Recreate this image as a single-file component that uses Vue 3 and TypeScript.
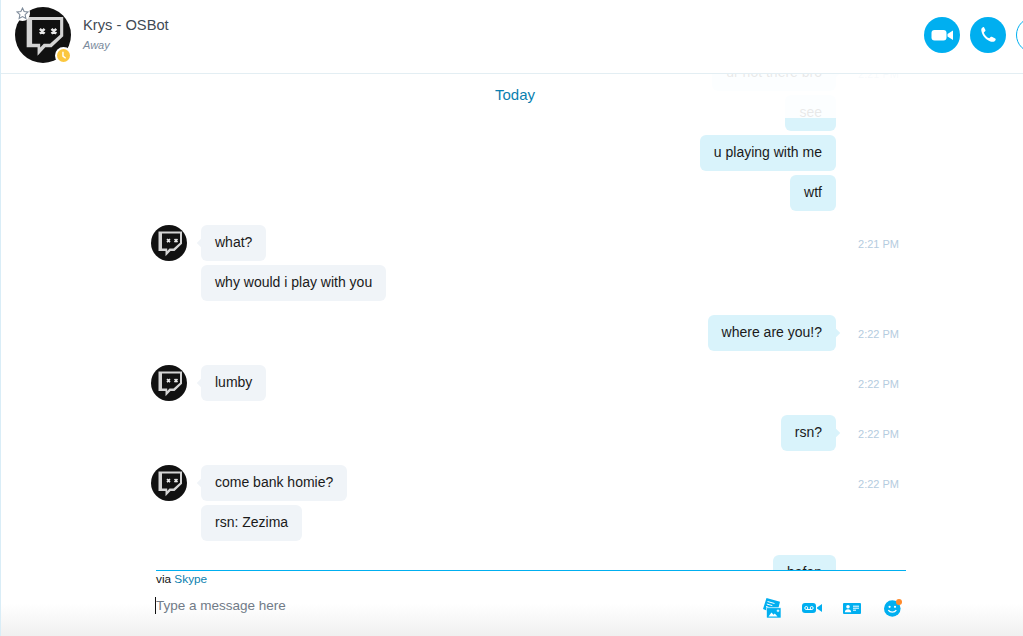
<script setup lang="ts">
interface Message {
  id: number
  from: 'them' | 'me'
  text: string
  time?: string
  avatar?: boolean
  newGroup?: boolean
}

const messages: Message[] = [
  { id: 1, from: 'me', text: 'ur not there bro', time: '2:21 PM' },
  { id: 2, from: 'me', text: 'see' },
  { id: 3, from: 'me', text: 'u playing with me' },
  { id: 4, from: 'me', text: 'wtf' },
  { id: 5, from: 'them', text: 'what?', time: '2:21 PM', avatar: true, newGroup: true },
  { id: 6, from: 'them', text: 'why would i play with you' },
  { id: 7, from: 'me', text: 'where are you!?', time: '2:22 PM', newGroup: true },
  { id: 8, from: 'them', text: 'lumby', time: '2:22 PM', avatar: true, newGroup: true },
  { id: 9, from: 'me', text: 'rsn?', time: '2:22 PM', newGroup: true },
  { id: 10, from: 'them', text: 'come bank homie?', time: '2:22 PM', avatar: true, newGroup: true },
  { id: 11, from: 'them', text: 'rsn: Zezima' },
  { id: 12, from: 'me', text: 'bafan', newGroup: true }
]
</script>

<template>
  <div class="page">
    <header class="topbar">
      <div class="profile">
        <div class="avatar-large">
          <svg class="logo" viewBox="0 0 36 36">
            <circle cx="18" cy="18" r="18" fill="#111" />
            <path d="M7.500 6.400H31V18.800L23.500 25.900H19.500L14.500 31.300V25.900H7.500Z" fill="#d4d4d4" />
            <path d="M11 8.400H29V17.800L22.500 23.600H18.500L16.200 26V23.600H11Z" fill="#111" />
            <path d="M16 14.100l3 3m0-3l-3 3M23.500 14.100l3 3m0-3l-3 3" stroke="#e8e8e8" stroke-width="1.600" />
          </svg>
          <span class="star">
            <svg viewBox="0 0 12 12"><path d="M6 1l1.500 3.200 3.500.4-2.600 2.400.7 3.500L6 8.800l-3.100 1.700.7-3.500L1 4.600l3.500-.4z" fill="none" stroke="#7f8c9b" stroke-width="1" /></svg>
          </span>
          <span class="away">
            <svg viewBox="0 0 12 12"><circle cx="6" cy="6" r="6" fill="#fbc73f" /><path d="M5.500 2.500v4l2.500 2" fill="none" stroke="#fff" stroke-width="1.300" /></svg>
          </span>
        </div>
        <div class="who">
          <div class="name">Krys - OSBot</div>
          <div class="status">Away</div>
        </div>
      </div>
      <div class="calls">
        <button class="call">
          <svg viewBox="0 0 36 36" width="36" height="36"><rect x="7.500" y="13" width="15" height="10.500" rx="3" fill="#fff" /><path d="M23.500 17l5.500-3.500v9.500l-5.500-3.500z" fill="#fff" /></svg>
        </button>
        <button class="call">
          <svg viewBox="0 0 36 36" width="36" height="36"><path d="M13.500 10c-1.500.6-2.500 1.700-2.200 3.500.7 5 5 9.900 9.800 11.200 1.900.5 3.800-.2 4.500-1.800.2-.6.100-1-.4-1.300l-3.300-1.800c-.5-.3-.9-.2-1.300.2l-1.300 1.300c-2.600-1-4.600-3.300-5.500-5.900l1.300-1.200c.4-.4.500-.8.300-1.300l-1.400-2.600c-.2-.4-.5-.5-1-.3z" fill="#fff" /></svg>
        </button>
        <button class="call outline"></button>
      </div>
    </header>

    <main class="chat">
      <div class="history">
        <div
          v-for="m in messages"
          :key="m.id"
          class="row"
          :class="[m.from, { 'new-group': m.newGroup }]"
        >
          <div class="side">
            <svg v-if="m.avatar" class="logo-small" viewBox="0 0 36 36">
              <circle cx="18" cy="18" r="18" fill="#111" />
              <path d="M7.500 6.400H31V18.800L23.500 25.900H19.500L14.500 31.300V25.900H7.500Z" fill="#d4d4d4" />
              <path d="M11 8.400H29V17.800L22.500 23.600H18.500L16.200 26V23.600H11Z" fill="#111" />
              <path d="M16 14.100l3 3m0-3l-3 3M23.500 14.100l3 3m0-3l-3 3" stroke="#e8e8e8" stroke-width="1.600" />
            </svg>
          </div>
          <div class="track">
            <div class="bubble" :class="{ tail: m.time }">{{ m.text }}</div>
          </div>
          <div class="time">{{ m.time }}</div>
        </div>
      </div>
      <div class="fade">
        <span class="today">Today</span>
      </div>
    </main>

    <footer class="composer">
      <div class="composer-inner">
        <div class="via">via <span class="skype">Skype</span></div>
        <div class="input-row">
          <div class="placeholder">Type a message here</div>
          <div class="tools">
            <svg viewBox="0 0 18 20" width="18" height="20">
              <path d="M3.500 0l13.500 3.800-1.500 6H6v3.600L0 11z" fill="#00aff0" />
              <path d="M4.500 3.500l7 2M3.800 6l5.500 1.600M3 8.500l2.500.7" stroke="#fff" stroke-width="1" />
              <rect x="3.500" y="9.800" width="14.500" height="10.200" fill="#00aff0" stroke="#fff" stroke-width=".6" />
              <path d="M5.500 18.500l3-4 2 2.300 1.300-1.200 2.700 2.900z" fill="#fff" />
              <path d="M15 11.500v2.600m-1.300-1.300h2.600" stroke="#fff" stroke-width="1" />
            </svg>
            <svg viewBox="0 0 20 10" width="20" height="10">
              <rect x="0" y="0" width="14" height="10" rx="3" fill="#00aff0" />
              <circle cx="4.300" cy="5" r="1.500" fill="none" stroke="#fff" stroke-width="1" />
              <circle cx="9.700" cy="5" r="1.500" fill="none" stroke="#fff" stroke-width="1" />
              <path d="M4.300 6.500h5.400" stroke="#fff" stroke-width="1" />
              <path d="M15 4.500l5-3.500v8l-5-3.500z" fill="#00aff0" />
            </svg>
            <svg viewBox="0 0 18 11" width="18" height="11">
              <rect width="18" height="11" rx="1" fill="#00aff0" />
              <circle cx="5" cy="3.800" r="1.800" fill="#fff" />
              <path d="M1.800 9.300c0-2 1.400-3 3.200-3s3.200 1 3.200 3z" fill="#fff" />
              <path d="M10 3.200h6M10 5.200h6M10 7.200h3" stroke="#fff" stroke-width="1" />
            </svg>
            <span class="smile">
              <svg viewBox="-2 0 20 18" width="20" height="18">
                <circle cx="8.300" cy="9.500" r="8.300" fill="#00aff0" />
                <circle cx="5.600" cy="7.800" r="1.100" fill="#fff" />
                <circle cx="11" cy="7.800" r="1.100" fill="#fff" />
                <path d="M4.300 11.200c1.800 2.600 6.200 2.600 8 0" fill="none" stroke="#fff" stroke-width="1.300" />
              </svg>
              <i class="dot"></i>
            </span>
          </div>
        </div>
      </div>
    </footer>
  </div>
</template>

<style scoped>
.page {
  height: 636px;
  display: flex;
  flex-direction: column;
  overflow: hidden;
  background: #fff;
  border-left: 1px solid #d9edf7;
  box-sizing: border-box;
  font-family: "Liberation Sans", Arial, sans-serif;
  color: #1a1a1a;
}

.topbar {
  height: 74px;
  flex: none;
  box-sizing: border-box;
  border-bottom: 1px solid #e3eef3;
  display: flex;
  justify-content: space-between;
  align-items: center;
  padding-left: 14px;
  background: #fff;
  position: relative;
  z-index: 3;
}

.profile {
  display: flex;
  align-items: center;
  gap: 12px;
  margin-top: -3px;
}

.avatar-large {
  position: relative;
  width: 56px;
  height: 56px;
}

.logo {
  width: 56px;
  height: 56px;
  display: block;
}

.star {
  position: absolute;
  left: 0;
  top: -1px;
  width: 15px;
  height: 15px;
  border-radius: 50%;
  background: #fff;
  display: flex;
  align-items: center;
  justify-content: center;
}

.star svg {
  width: 13px;
  height: 13px;
}

.away {
  position: absolute;
  right: -1px;
  bottom: -1px;
  width: 17px;
  height: 17px;
  border-radius: 50%;
  background: #fff;
  display: flex;
  align-items: center;
  justify-content: center;
}

.away svg {
  width: 13px;
  height: 13px;
}

.who {
  margin-top: -2px;
}

.name {
  font-size: 14.700px;
  line-height: 20px;
  color: #3f4a55;
}

.status {
  font-size: 11px;
  line-height: 16px;
  margin-top: 2px;
  font-style: italic;
  color: #7a8a9c;
}

.calls {
  display: flex;
  gap: 10px;
  margin-right: -29px;
  margin-top: -3px;
}

.call {
  width: 36px;
  height: 36px;
  padding: 0;
  border: none;
  border-radius: 50%;
  background: #00aff0;
  flex: none;
}

.call svg {
  display: block;
}

.call.outline {
  background: #fff;
  border: 1px solid #00aff0;
  box-sizing: border-box;
}

.chat {
  flex: 1;
  min-height: 0;
  position: relative;
  overflow: hidden;
}

.history {
  margin-top: -19px;
  padding-left: 150px;
  display: flex;
  flex-direction: column;
  gap: 4px;
}

.row {
  display: flex;
  height: 36px;
}

.row.new-group {
  margin-top: 10px;
}

.side {
  width: 50px;
  flex: none;
}

.logo-small {
  width: 36px;
  height: 36px;
  display: block;
}

.track {
  width: 635px;
  flex: none;
  display: flex;
}

.me .track {
  justify-content: flex-end;
}

.bubble {
  position: relative;
  height: 36px;
  box-sizing: border-box;
  padding: 0 14px;
  line-height: 35px;
  font-size: 14px;
  border-radius: 6px;
  background: #f0f4f8;
  white-space: nowrap;
}

.bubble.tail::after {
  content: "";
  position: absolute;
  top: 15px;
  left: -3px;
  width: 6px;
  height: 6px;
  background: inherit;
  transform: rotate(45deg);
}

.me .bubble {
  background: #d9f3fb;
}

.me .bubble.tail::after {
  left: auto;
  right: -3px;
}

.time {
  width: 63px;
  flex: none;
  text-align: right;
  font-size: 11px;
  line-height: 38px;
  height: 36px;
  color: #b5cce0;
}

.fade {
  position: absolute;
  left: 0;
  right: 0;
  top: 0;
  height: 44px;
  background: rgba(255, 255, 255, 0.9);
  display: flex;
  justify-content: center;
  padding-top: 12px;
  box-sizing: border-box;
}

.today {
  font-size: 15px;
  line-height: 17px;
  color: #0a7fb0;
  margin-left: 6px;
}

.composer {
  height: 66px;
  flex: none;
  background: linear-gradient(to bottom, #fff 0, #fff 34px, #f0f0f0 100%);
  position: relative;
  z-index: 2;
}

.composer-inner {
  margin-left: 155px;
  width: 750px;
  border-top: 1px solid #00aff0;
}

.via {
  font-size: 11.800px;
  line-height: 14px;
  margin-top: 1px;
  color: #111;
}

.skype {
  color: #0a7fb0;
}

.input-row {
  display: flex;
  justify-content: space-between;
  align-items: flex-start;
  margin-top: 11px;
}

.placeholder {
  font-size: 13.500px;
  line-height: 17px;
  color: #717b87;
  border-left: 1px solid #111;
  margin-left: -1px;
}

.tools {
  display: flex;
  align-items: center;
  gap: 21px;
  margin-right: 4px;
  margin-top: 1px;
}

.tools svg {
  display: block;
}

.smile {
  position: relative;
  display: block;
}

.dot {
  position: absolute;
  right: 0;
  top: 0;
  width: 6px;
  height: 6px;
  border-radius: 50%;
  background: #ff8a2b;
}
</style>
